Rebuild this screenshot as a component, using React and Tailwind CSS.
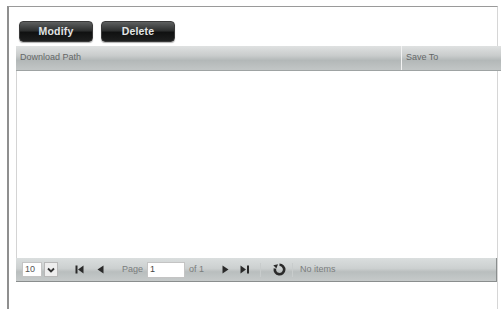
import React from "react";

function Btn({ children, className = "" }) {
  return (
    <div
      className={
        "flex h-[21px] w-[74px] items-center justify-center rounded-[4px] border border-[#3a3a3a] bg-[linear-gradient(#5e6060_0%,#2e3030_45%,#101111_55%,#1d1e1e_100%)] text-[10.5px] font-bold tracking-[0.2px] text-[#e2e4e4] shadow-[0_1px_1px_rgba(0,0,0,0.3)] " +
        className
      }
    >
      {children}
    </div>
  );
}

export default function App() {
  return (
    <div
      className="relative h-[309px] w-[501px] overflow-hidden bg-white"
      style={{ fontFamily: '"Liberation Sans", Arial, sans-serif' }}
    >
      <div className="ml-[7px] mt-[6px] h-[303px] w-[491px] border-l-2 border-r border-t border-l-[#8f8f8f] border-r-[#d6d6d6] border-t-[#9a9a9a] pl-[7px] pt-[14px]">
        <div className="ml-[3px] flex gap-[8px]">
          <Btn>Modify</Btn>
          <Btn>Delete</Btn>
        </div>
        <div className="mt-[4px] w-[485px]">
          <div className="flex h-[25px] border-b border-[#9ea3a3] bg-[linear-gradient(#dfe1e1_0%,#c9cccc_40%,#b3b8b8_60%,#c2c6c6_100%)]">
            <div className="flex w-[386px] items-center border-r border-r-[#f2f2f2] pl-[4px] text-[9px] text-[#646767]">
              Download Path
            </div>
            <div className="flex flex-1 items-center pl-[4px] text-[9px] text-[#646767]">
              Save To
            </div>
          </div>
          <div className="h-[187px] w-[481px] border-l border-l-[#d4d4d4] bg-white" />
          <div className="flex h-[24px] w-[481px] items-center border-b border-r border-b-[#8a8e8e] border-r-[#8a8e8e] bg-[linear-gradient(#dadede_0%,#ccd0d0_45%,#b9bebe_60%,#c6caca_100%)] pl-[6px] text-[9px] text-[#7a7d7d]">
            <div className="flex h-[15px] w-[20px] items-center border border-[#c4c4c4] bg-white pl-[2px] text-[9px] text-[#555]">
              10
            </div>
            <div className="ml-[2px] flex h-[15px] w-[14px] items-center justify-center border border-[#b8b8b8] bg-[#eeeeee]">
              <svg width="8" height="6" viewBox="0 0 8 6">
                <path d="M1 1.5 L4 4.5 L7 1.5" stroke="#333" strokeWidth="1.8" fill="none" />
              </svg>
            </div>
            <svg className="ml-[17px]" width="9" height="9" viewBox="0 0 9 9">
              <rect x="0.5" y="0.5" width="2" height="8" fill="#2a2a2a" />
              <path d="M3 4.5 L8.5 0.5 L8.5 8.5 Z" fill="#2a2a2a" />
            </svg>
            <svg className="ml-[13px]" width="7" height="9" viewBox="0 0 7 9">
              <path d="M0.5 4.5 L6.5 0.5 L6.5 8.5 Z" fill="#2a2a2a" />
            </svg>
            <span className="ml-[18px]">Page</span>
            <div className="ml-[4px] flex h-[16px] w-[38px] items-center border border-[#c4c4c4] bg-white pl-[2px] text-[9px] text-[#444]">
              1
            </div>
            <span className="ml-[4px]">of 1</span>
            <svg className="ml-[18px]" width="7" height="9" viewBox="0 0 7 9">
              <path d="M0.5 0.5 L6.5 4.5 L0.5 8.5 Z" fill="#2a2a2a" />
            </svg>
            <svg className="ml-[11px]" width="10" height="9" viewBox="0 0 10 9">
              <path d="M0.5 0.5 L6 4.5 L0.5 8.5 Z" fill="#2a2a2a" />
              <rect x="7" y="0.5" width="2" height="8" fill="#2a2a2a" />
            </svg>
            <div className="ml-[10px] h-[14px] w-px bg-[#c8cccc]" />
            <svg className="ml-[12px]" width="13" height="13" viewBox="0 0 13 13">
              <path
                d="M6.5 1.8 A4.7 4.7 0 1 1 1.9 5.5"
                stroke="#2a2a2a"
                strokeWidth="2.6"
                fill="none"
              />
              <path d="M0.3 2.3 L5 1.2 L3.4 5.6 Z" fill="#2a2a2a" />
            </svg>
            <div className="ml-[6px] h-[14px] w-px bg-[#c8cccc]" />
            <span className="ml-[7px]">No items</span>
          </div>
        </div>
      </div>
    </div>
  );
}
